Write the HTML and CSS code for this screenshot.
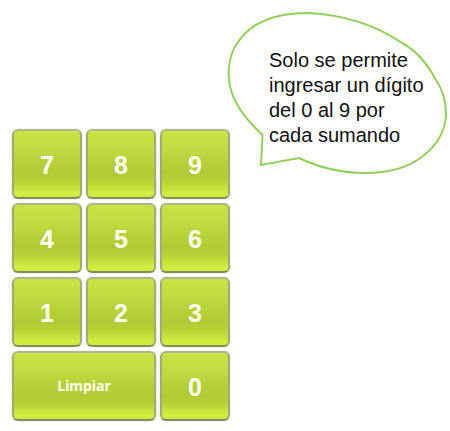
FILE: index.html
```
<!DOCTYPE html>
<html lang="es">
<head>
<meta charset="utf-8">
<title>Teclado numérico</title>
<link rel="stylesheet" href="styles.css">
</head>
<body>
<main class="panel">
  <div class="keypad">
    <button class="key" type="button">7</button>
    <button class="key" type="button">8</button>
    <button class="key" type="button">9</button>
    <button class="key" type="button">4</button>
    <button class="key" type="button">5</button>
    <button class="key" type="button">6</button>
    <button class="key" type="button">1</button>
    <button class="key" type="button">2</button>
    <button class="key" type="button">3</button>
    <button class="key key-clear" type="button">Limpiar</button>
    <button class="key" type="button">0</button>
  </div>
  <div class="bubble">
    <svg class="bubble-outline" viewBox="0 0 220 164" aria-hidden="true">
      <path d="M35.500 123 C27 115 16 104 10 92 C4 82 1.500 72 1.500 60 C2 48 5 38 11 30 C25 9 51 1 81 1 C122 3 153 16 175 31 C190 39 201 53 209 68 C216 78 219 90 219 103 C218 120 209 134 196 144 C180 157 160 161 138 161 C115 161 91 155 72 146 L34 153 Z"/>
    </svg>
    <p class="bubble-text">Solo se permite<br>ingresar un dígito<br>del 0 al 9 por<br>cada sumando</p>
  </div>
</main>
</body>
</html>
```
FILE: styles.css
```
* {
  box-sizing: border-box;
}

body {
  margin: 0;
  background: #fff;
  font-family: "Liberation Sans", Arial, sans-serif;
}

.panel {
  display: flex;
  align-items: flex-start;
  padding: 12px 0 8px 12px;
}

.keypad {
  display: grid;
  grid-template-columns: repeat(3, 70px);
  grid-auto-rows: 70px;
  gap: 4px;
  margin-top: 117px;
}

.key {
  padding: 2px 0 0;
  border: 2px solid;
  border-color: #b0b488 #a3ab72 #868b5a #a3ab72;
  border-radius: 6px;
  background: linear-gradient(#c9e445 0%, #bfd941 30%, #b1c935 64%, #b8d036 76%, #d0ed40 94%, #cdea40 100%);
  box-shadow: 0 0 2px #ccc;
  color: #fffff0;
  font: bold 25px "Liberation Sans", Arial, sans-serif;
  cursor: pointer;
}

.key-clear {
  grid-column: span 2;
  padding: 0 0 2px;
  font: bold 14px "Noto Sans", sans-serif;
}

.bubble {
  display: grid;
  flex: 0 0 220px;
  margin-left: -3px;
}

.bubble-outline,
.bubble-text {
  grid-area: 1 / 1;
}

.bubble-outline {
  width: 100%;
  fill: #fff;
  stroke: #8fd258;
  stroke-width: 2;
}

.bubble-text {
  margin: 0;
  padding: 36px 0 0 42px;
  color: #111;
  font-size: 20px;
  line-height: 25px;
  white-space: nowrap;
}
```
